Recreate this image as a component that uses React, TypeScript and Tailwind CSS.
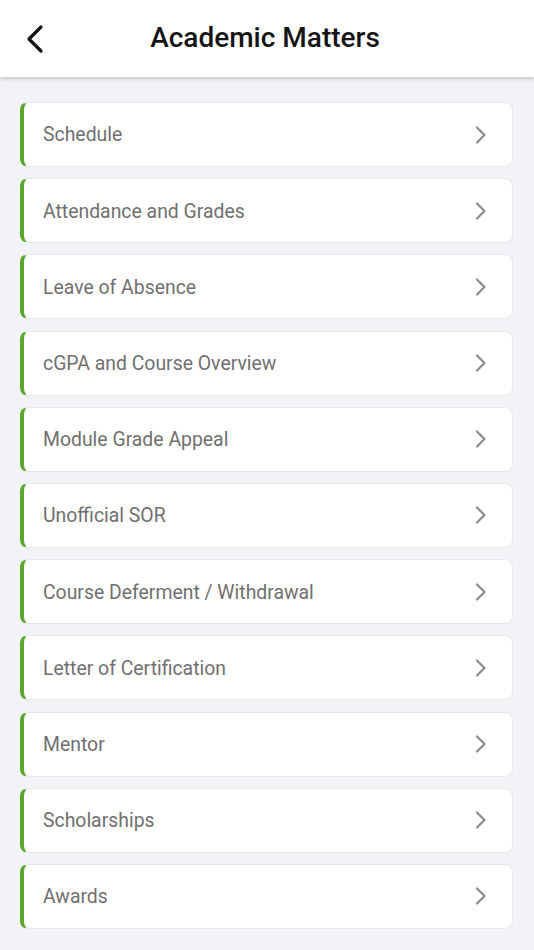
import React from "react";

const items = [
  "Schedule",
  "Attendance and Grades",
  "Leave of Absence",
  "cGPA and Course Overview",
  "Module Grade Appeal",
  "Unofficial SOR",
  "Course Deferment / Withdrawal",
  "Letter of Certification",
  "Mentor",
  "Scholarships",
  "Awards",
];

export default function App() {
  return (
    <div
      className="w-[534px] h-[950px] bg-[#f2f3f7] flex flex-col overflow-hidden"
      style={{ fontFamily: "Roboto, 'Noto Sans', sans-serif" }}
    >
      <header className="relative h-[77px] bg-white flex items-center justify-center shadow-[0_2px_4px_rgba(0,0,0,0.18)] z-10 shrink-0">
        <button className="absolute left-[22px] top-[23px] w-[26px] h-[32px] flex items-center justify-center">
          <svg width="22" height="30" viewBox="0 0 22 30" fill="none">
            <path d="M17 3 L5 15 L17 27" stroke="#141414" strokeWidth="3.2" strokeLinecap="round" strokeLinejoin="round" />
          </svg>
        </button>
        <h1 className="text-[28px] font-medium text-[#151515] ml-[-4px] pb-[1px]">Academic Matters</h1>
      </header>
      <main className="flex flex-col gap-[11.2px] pt-[25px] pl-[20px] pr-[21px]">
        {items.map((t) => (
          <div
            key={t}
            className="h-[65px] bg-white rounded-[8px] border border-[#e6e7eb] border-l-[4px] border-l-[#5aa72e] flex items-center pl-[19px] pr-[24px]"
          >
            <span className="flex-1 text-[19.4px] font-normal text-[#707070] pt-[1px]">{t}</span>
            <svg width="14" height="20" viewBox="0 0 14 20" fill="none">
              <path d="M3 2.5 L10.5 10 L3 17.5" stroke="#8c8c8c" strokeWidth="2.2" strokeLinecap="round" strokeLinejoin="round" />
            </svg>
          </div>
        ))}
      </main>
    </div>
  );
}
